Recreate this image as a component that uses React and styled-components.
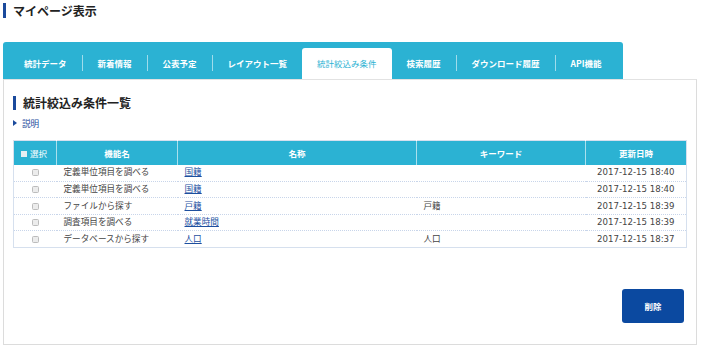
import React from 'react';
import styled, { createGlobalStyle } from 'styled-components';

const CYAN = '#2bb2d3';
const NAVY = '#1b4a9c';

const Global = createGlobalStyle`
  body { margin: 0; background: #fff; }
  * { box-sizing: border-box; }
`;

const Page = styled.div`
  width: 702px;
  padding: 3px 0 0 3px;
  font-family: "Noto Sans CJK JP", sans-serif;
  color: #333;
`;

const PageTitle = styled.h1`
  margin: 0 0 24px 0;
  height: 15px;
  line-height: 15px;
  border-left: 3px solid ${NAVY};
  padding-left: 7px;
  font-size: 12px;
  font-weight: 700;
  color: #222;
`;

const TabBar = styled.nav`
  width: 620px;
  height: 37px;
  background: ${CYAN};
  border-radius: 3px 3px 0 0;
  display: flex;
  align-items: flex-end;
  padding-left: 6px;
`;

const Tab = styled.div`
  height: 31px;
  padding: 0 15px 2px;
  display: flex;
  align-items: center;
  font-size: 8.5px;
  font-weight: ${p => (p.$active ? 400 : 700)};
  color: ${p => (p.$active ? CYAN : '#fff')};
  background: ${p => (p.$active ? '#fff' : 'transparent')};
  border-radius: 3px 3px 0 0;
  white-space: nowrap;
`;

const Sep = styled.span`
  width: 1px;
  height: 16px;
  margin-bottom: 8px;
  background: rgba(255, 255, 255, 0.55);
`;

const Panel = styled.section`
  width: 694px;
  border: 1px solid #dcdcdc;
  border-top-color: #e2e2e2;
  padding: 16px 10px 21px 9px;
`;

const Heading = styled.h2`
  margin: 0;
  height: 14px;
  line-height: 14px;
  border-left: 3px solid ${NAVY};
  padding-left: 7px;
  font-size: 12px;
  font-weight: 700;
  color: #222;
`;

const HelpLink = styled.a`
  display: flex;
  align-items: center;
  gap: 5px;
  margin-top: 8px;
  height: 10px;
  font-size: 8.6px;
  color: ${NAVY};
  text-decoration: none;
  &::before {
    content: '';
    width: 0;
    height: 0;
    border-top: 3px solid transparent;
    border-bottom: 3px solid transparent;
    border-left: 4px solid ${NAVY};
  }
`;

const Table = styled.table`
  margin-top: 12px;
  width: 673px;
  table-layout: fixed;
  border-collapse: collapse;
  border: 1px solid #d6e0ee;
  font-family: "DejaVu Sans", "Noto Sans CJK JP", sans-serif;
  font-size: 8.6px;
`;

const Th = styled.th`
  height: 24px;
  background: ${CYAN};
  color: #fff;
  font-family: "Noto Sans CJK JP", sans-serif;
  font-size: 8.5px;
  font-weight: ${p => (p.$plain ? 400 : 700)};
  text-align: ${p => p.$align || 'center'};
  padding: 0 7px;
  border-left: 1px solid rgba(255, 255, 255, 0.6);
  &:first-child { border-left: none; }
`;

const HeadCheck = styled.span`
  display: inline-block;
  width: 6px;
  height: 6px;
  background: #e6eef2;
  margin-right: 3px;
  vertical-align: -0.5px;
`;

const Td = styled.td`
  height: 16.6px;
  padding: 0 7px;
  color: #444;
  text-align: ${p => p.$align || 'left'};
  border-bottom: 1px dotted #c8d5ea;
  white-space: nowrap;
  line-height: 1;
`;

const Row = styled.tr`
  &:last-child td { border-bottom: none; }
`;

const Check = styled.span`
  display: inline-block;
  width: 7px;
  height: 7px;
  border: 1px solid #bcbcbc;
  border-radius: 1.5px;
  background: #ececec;
  vertical-align: middle;
`;

const NameLink = styled.a`
  color: #1d4f9f;
  text-decoration: underline;
`;

const Actions = styled.div`
  display: flex;
  justify-content: flex-end;
  padding-right: 2px;
  margin-top: 41px;
`;

const DeleteButton = styled.button`
  width: 62px;
  height: 34px;
  border: none;
  border-radius: 3px;
  background: #0b49a0;
  color: #fff;
  font-family: "Noto Sans CJK JP", sans-serif;
  font-size: 8.5px;
  font-weight: 700;
`;

const tabs = ['統計データ', '新着情報', '公表予定', 'レイアウト一覧', '統計絞込み条件', '検索履歴', 'ダウンロード履歴', 'API機能'];
const ACTIVE = 4;

const rows = [
  { fn: '定義単位項目を調べる', name: '国籍', kw: '', date: '2017-12-15 18:40' },
  { fn: '定義単位項目を調べる', name: '国籍', kw: '', date: '2017-12-15 18:40' },
  { fn: 'ファイルから探す', name: '戸籍', kw: '戸籍', date: '2017-12-15 18:39' },
  { fn: '調査項目を調べる', name: '就業時間', kw: '', date: '2017-12-15 18:39' },
  { fn: 'データベースから探す', name: '人口', kw: '人口', date: '2017-12-15 18:37' },
];

export default function App() {
  return (
    <Page>
      <Global />
      <PageTitle>マイページ表示</PageTitle>
      <TabBar>
        {tabs.map((t, i) => (
          <React.Fragment key={t}>
            {i > 0 && i !== ACTIVE && i - 1 !== ACTIVE && <Sep />}
            <Tab $active={i === ACTIVE}>{t}</Tab>
          </React.Fragment>
        ))}
      </TabBar>
      <Panel>
        <Heading>統計絞込み条件一覧</Heading>
        <HelpLink>説明</HelpLink>
        <Table>
          <colgroup>
            <col style={{ width: 43 }} />
            <col style={{ width: 121 }} />
            <col style={{ width: 239 }} />
            <col style={{ width: 169 }} />
            <col style={{ width: 101 }} />
          </colgroup>
          <thead>
            <tr>
              <Th $align="left" $plain><HeadCheck />選択</Th>
              <Th>機能名</Th>
              <Th>名称</Th>
              <Th>キーワード</Th>
              <Th>更新日時</Th>
            </tr>
          </thead>
          <tbody>
            {rows.map((r, i) => (
              <Row key={i}>
                <Td $align="center"><Check /></Td>
                <Td>{r.fn}</Td>
                <Td><NameLink>{r.name}</NameLink></Td>
                <Td>{r.kw}</Td>
                <Td $align="center">{r.date}</Td>
              </Row>
            ))}
          </tbody>
        </Table>
        <Actions>
          <DeleteButton>削除</DeleteButton>
        </Actions>
      </Panel>
    </Page>
  );
}
